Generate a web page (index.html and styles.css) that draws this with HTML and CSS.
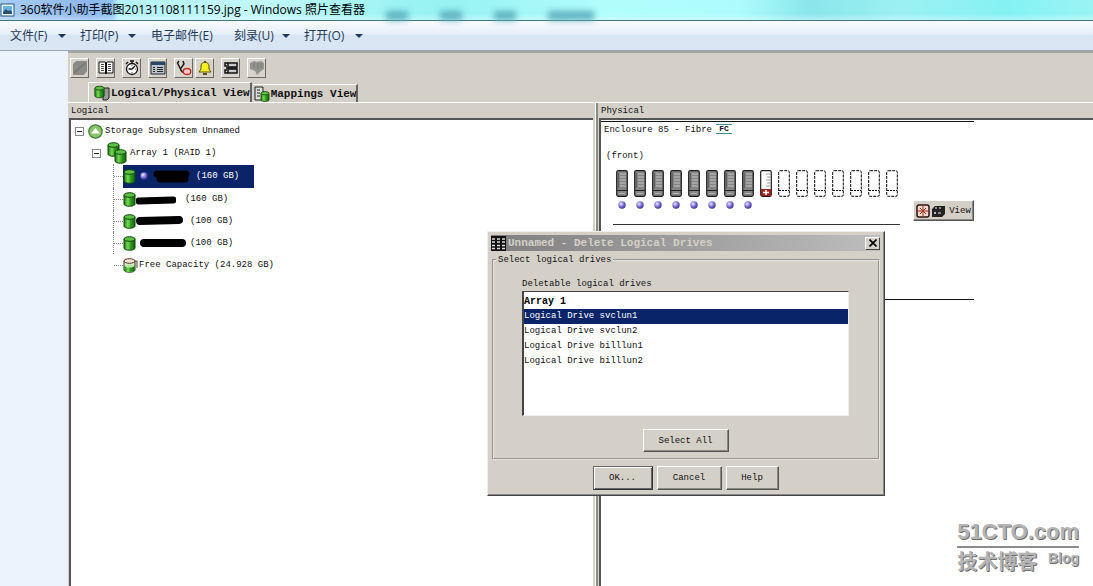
FILE: index.html
```
<!DOCTYPE html>
<html lang="zh-CN">
<head>
<meta charset="utf-8">
<title>360软件小助手截图20131108111159.jpg - Windows 照片查看器</title>
<link rel="stylesheet" href="styles.css">
</head>
<body>
<svg class="sprite" aria-hidden="true">
  <defs>
    <linearGradient id="green" x1="0" x2="1" y1="0" y2="0">
      <stop offset="0" stop-color="#1d7a12"/><stop offset=".35" stop-color="#7bd65a"/><stop offset=".6" stop-color="#2fa01c"/><stop offset="1" stop-color="#14600c"/>
    </linearGradient>
    <radialGradient id="orb" cx=".38" cy=".35" r=".65">
      <stop offset="0" stop-color="#f2f0ff"/><stop offset=".45" stop-color="#8d84e0"/><stop offset="1" stop-color="#3a3296"/>
    </radialGradient>
  </defs>
  <symbol id="cyl" viewBox="0 0 13 15">
    <path d="M1 3v9c0 3 11 3 11 0V3z" fill="url(#green)" stroke="#12450c"/>
    <ellipse cx="6.500" cy="3" rx="5.500" ry="2.300" fill="#5cc043" stroke="#12450c"/>
  </symbol>
  <symbol id="cyl2" viewBox="0 0 20 22">
    <use href="#cyl" x="0" y="0" width="13" height="15"/>
    <use href="#cyl" x="7" y="7" width="13" height="15"/>
  </symbol>
  <symbol id="free" viewBox="0 0 15 15">
    <path d="M1 3v9c0 3 11 3 11 0V3z" fill="#e4e8d4" stroke="#12450c"/>
    <path d="M1.500 8v4c0 2.500 10 2.500 10 0V8z" fill="url(#green)"/>
    <ellipse cx="6.500" cy="8" rx="4.500" ry="1.500" fill="#b7e89c"/>
    <ellipse cx="6.500" cy="3" rx="5.500" ry="2.300" fill="#eee5d6" stroke="#5c2a20"/>
    <path d="M12 3h2v7" fill="none" stroke="#444"/>
  </symbol>
  <symbol id="ball" viewBox="0 0 8 8"><circle cx="4" cy="4" r="3.700" fill="url(#orb)"/></symbol>
  <symbol id="drive" viewBox="0 0 12 27">
    <rect x=".7" y=".7" width="10.600" height="25.600" rx="1.500" fill="#858585" stroke="#1c1c1c" stroke-width="1.200"/>
    <path d="M4 4h6M4 7h6M4 10h6M4 13h6M4 16h6" stroke="#c4c4c4"/>
    <path d="M2.500 3v15" stroke="#606060"/>
    <path d="M1 20.500h10" stroke="#222"/><path d="M3 23.500h6" stroke="#b4b4b4"/>
  </symbol>
  <symbol id="spare" viewBox="0 0 12 27">
    <rect x=".7" y=".7" width="10.600" height="25.600" rx="1.500" fill="#fff" stroke="#1c1c1c" stroke-width="1.200"/>
    <path d="M6 4h5M7 7h4M6 10h5M7 13h4M6 16h5" stroke="#999"/>
    <rect x="1" y="19" width="10" height="7" fill="#a0221c"/>
    <path d="M6 20v5M3 22.500h6" stroke="#fff" stroke-width="1.600"/>
  </symbol>
  <symbol id="empty" viewBox="0 0 12 27">
    <rect x=".7" y=".7" width="10.600" height="25.600" rx="1.500" fill="#fff" stroke="#000" stroke-dasharray="3 1"/>
    <path d="M1 20.500h10" stroke="#000" stroke-dasharray="2 1"/>
  </symbol>
</svg>

<header class="titlebar">
  <svg class="i16" viewBox="0 0 16 16"><rect x="1" y="2" width="13" height="12" fill="#e9f6fd" stroke="#2b5b86"/><path d="M3 4h9v8H3z" fill="#6ab4de"/><path d="M3 10l3-3 2 2 2-1 2 2v2H3z" fill="#28506e"/></svg>
  <h1>360软件小助手截图20131108111159.jpg - Windows 照片查看器</h1>
  <span class="ghosts" aria-hidden="true"><i></i><i></i><i></i><i class="wide"></i></span>
</header>
<nav class="menubar">
  <button class="drop m1">文件(F)</button>
  <button class="drop m2">打印(P)</button>
  <button class="m3">电子邮件(E)</button>
  <button class="drop m4">刻录(U)</button>
  <button class="drop m5">打开(O)</button>
</nav>

<main class="viewer">
  <div class="app">
    <div class="toolbar">
      <button aria-label="Subsystem"><svg viewBox="0 0 16 16"><path d="M1 4l3-3h11v10l-3 4H1z" fill="#8a8a88"/><path d="M2 13L13 3" stroke="#7b7b79" stroke-width="2"/></svg></button>
      <button aria-label="Profile"><svg viewBox="0 0 16 16"><path d="M1 2h6l1 1 1-1h6v11H9l-1 1-1-1H1z" fill="#fff" stroke="#111"/><path d="M8 3v11" stroke="#111" stroke-width="2"/><path d="M3 4.500h3M3 6.500h3M3 8.500h3M3 10.500h3M10 4.500h3M10 6.500h3M10 8.500h3M10 10.500h3" stroke="#444"/></svg></button>
      <button aria-label="Timer"><svg viewBox="0 0 16 16"><circle cx="8" cy="9" r="5.500" fill="#fff" stroke="#111" stroke-width="1.300"/><path d="M6 1h4M8 1v3M2 4l2-2M14 4l-2-2M8 9l3-3M8 9H5" stroke="#111" stroke-width="1.400"/><path d="M8 5v1M8 12v1M11 9h1M4 9h1" stroke="#555"/></svg></button>
      <button aria-label="Event log"><svg viewBox="0 0 16 16"><path d="M1 2h14v12H1z" fill="#b9c4cc" stroke="#222"/><path d="M1 2h14v3H1z" fill="#294869"/><path d="M3 7.500h2M3 9.500h2M3 11.500h2M7 7.500h6M7 9.500h6M7 11.500h6" stroke="#222"/></svg></button>
      <button class="tight" aria-label="Diagnose"><svg viewBox="0 0 16 16"><path d="M3 1L1.500 3l3 6 3.500-5-1-3M4.500 9c1 3 3 4 5 4" fill="none" stroke="#111" stroke-width="1.400"/><ellipse cx="11" cy="11.500" rx="3.800" ry="3" fill="#f3c9c4" stroke="#c22a22" stroke-width="1.300"/></svg></button>
      <button aria-label="Alerts"><svg viewBox="0 0 16 16"><path d="M2 12l2-3V6c0-5 8-5 8 0v3l2 3z" fill="#f5ec22" stroke="#5a5400"/><path d="M8 1v2M6 14h4" stroke="#5a5400" stroke-width="2"/></svg></button>
      <button aria-label="Locate"><svg viewBox="0 0 16 16"><path d="M5 3h9v4H5zM5 9h9v4H5z" fill="#ccc" stroke="#111" stroke-width="1.500"/><path d="M5 3H2v3h2M5 13H2v-3h2M3 8h11" fill="none" stroke="#111" stroke-width="1.500"/></svg></button>
      <button aria-label="Help"><svg viewBox="0 0 16 16"><path d="M1 3l4-2 3 1 4-1 3 2v6l-3 2-4 4-2-4-5-2z" fill="#929290"/><path d="M5 3v5M9 3v6M12 3v5" stroke="#777"/></svg></button>
    </div>
    <div class="tabs" role="tablist">
      <button class="tab active" role="tab" aria-selected="true"><svg class="i16" viewBox="0 0 16 16"><path d="M9 3h6v10l-2 2H9z" fill="#999" stroke="#222"/><use href="#cyl" x="0" y="0" width="11" height="14"/></svg>Logical/Physical View</button>
      <button class="tab" role="tab" aria-selected="false"><svg class="i16" viewBox="0 0 16 16"><path d="M1 1h8v13H1z" fill="#ddd" stroke="#222"/><path d="M3 4h3M3 7h3M3 10h3" stroke="#222"/><use href="#cyl" x="6" y="5" width="10" height="11"/></svg>Mappings View</button>
    </div>
    <div class="split">
      <section class="pane logical">
        <h2>Logical</h2>
        <div class="well">
          <ul class="tree">
            <li class="root"><button class="exp" aria-label="Collapse"></button><svg class="i15" viewBox="0 0 15 15"><circle cx="7.500" cy="7.500" r="6.700" fill="#8cc46c" stroke="#45803a" stroke-width="1.300"/><path d="M3 9.500L7.500 4 12 9.500z" fill="#fff"/></svg>Storage Subsystem Unnamed</li>
            <li class="array"><button class="exp" aria-label="Collapse"></button><svg class="i20" viewBox="0 0 20 22"><use href="#cyl2" width="20" height="22"/></svg>Array 1 (RAID 1)</li>
            <li class="leaf picked"><span class="node sel"><svg class="cyl"><use href="#cyl"/></svg><svg class="ball"><use href="#ball"/></svg><svg class="ink" viewBox="0 0 40 14"><path d="M5 5h29M8 10h25" stroke-width="7"/></svg><span class="size">(160 GB)</span></span></li>
            <li class="leaf"><span class="node"><svg class="cyl"><use href="#cyl"/></svg><svg class="ink" viewBox="0 0 40 14"><path d="M3 9l34-1" stroke-width="7"/></svg><span class="size nine">(160 GB)</span></span></li>
            <li class="leaf"><span class="node"><svg class="cyl"><use href="#cyl"/></svg><svg class="ink long" viewBox="0 0 50 14"><path d="M4 7l39-1" stroke-width="8"/></svg><span class="size">(100 GB)</span></span></li>
            <li class="leaf"><span class="node"><svg class="cyl"><use href="#cyl"/></svg><svg class="ink long" viewBox="0 0 50 14"><path d="M8 7h38" stroke-width="8"/></svg><span class="size">(100 GB)</span></span></li>
            <li class="leaf last"><span class="node"><svg class="free"><use href="#free"/></svg>Free Capacity (24.928 GB)</span></li>
          </ul>
        </div>
      </section>
      <section class="pane physical">
        <h2>Physical</h2>
        <div class="well">
          <div class="enclosure">
            <p class="name">Enclosure 85 - Fibre <span class="fc">FC</span></p>
            <p class="side">(front)</p>
            <div class="bays">
              <div class="slot"><svg><use href="#drive"/></svg><svg class="dot"><use href="#ball"/></svg></div>
              <div class="slot"><svg><use href="#drive"/></svg><svg class="dot"><use href="#ball"/></svg></div>
              <div class="slot"><svg><use href="#drive"/></svg><svg class="dot"><use href="#ball"/></svg></div>
              <div class="slot"><svg><use href="#drive"/></svg><svg class="dot"><use href="#ball"/></svg></div>
              <div class="slot"><svg><use href="#drive"/></svg><svg class="dot"><use href="#ball"/></svg></div>
              <div class="slot"><svg><use href="#drive"/></svg><svg class="dot"><use href="#ball"/></svg></div>
              <div class="slot"><svg><use href="#drive"/></svg><svg class="dot"><use href="#ball"/></svg></div>
              <div class="slot"><svg><use href="#drive"/></svg><svg class="dot"><use href="#ball"/></svg></div>
              <div class="slot"><svg><use href="#spare"/></svg></div>
              <div class="slot"><svg><use href="#empty"/></svg></div>
              <div class="slot"><svg><use href="#empty"/></svg></div>
              <div class="slot"><svg><use href="#empty"/></svg></div>
              <div class="slot"><svg><use href="#empty"/></svg></div>
              <div class="slot"><svg><use href="#empty"/></svg></div>
              <div class="slot"><svg><use href="#empty"/></svg></div>
              <div class="slot"><svg><use href="#empty"/></svg></div>
              <button class="raised view"><svg viewBox="0 0 30 14"><rect x="1" y="1" width="12" height="12" rx="2" fill="#f2d9cf" stroke="#2a1512" stroke-width="1.500"/><path d="M7 1v12M1 7h12M4 4l6 6M10 4l-6 6" stroke="#a8301f"/><path d="M16 5l3-3h10v8l-3 3H16z" fill="#222"/><path d="M18 9h2M22 9h3M19 8v2M19 4h2M23 4h2" stroke="#eee"/></svg>View</button>
            </div>
            <hr class="mid">
          </div>
        </div>
      </section>
    </div>
  </div>
</main>

<section class="dialog" role="dialog" aria-labelledby="dlg-title">
  <header class="caption">
    <svg viewBox="0 0 15 15"><rect width="15" height="15" fill="#111"/><path d="M1 3h3M6 3h3M11 3h3M1 6h3M6 6h3M11 6h3M1 9.500h3M6 9.500h3M11 9.500h3M1 12.500h3M6 12.500h3M11 12.500h3" stroke="#ddd" stroke-width="1.500"/></svg>
    <h2 id="dlg-title">Unnamed - Delete Logical Drives</h2>
    <button class="close" aria-label="Close"><svg viewBox="0 0 8 8"><path d="M0.500 0.500l7 7M7.500 0.500l-7 7" stroke="#000" stroke-width="1.600"/></svg></button>
  </header>
  <fieldset>
    <legend>Select logical drives</legend>
    <p id="list-label">Deletable logical drives</p>
    <ul class="list" role="listbox" aria-labelledby="list-label">
      <li class="group">Array 1</li>
      <li role="option" aria-selected="true">Logical Drive svclun1</li>
      <li role="option" aria-selected="false">Logical Drive svclun2</li>
      <li role="option" aria-selected="false">Logical Drive billlun1</li>
      <li role="option" aria-selected="false">Logical Drive billlun2</li>
    </ul>
    <button class="raised all">Select All</button>
  </fieldset>
  <footer>
    <button class="raised ok">OK...</button>
    <button class="raised cancel">Cancel</button>
    <button class="raised help">Help</button>
  </footer>
</section>

<aside class="watermark">
  <strong>51CTO.com</strong>
  <div><span class="cn">技术博客</span><span class="blog">Blog</span></div>
</aside>
</body>
</html>
```
FILE: styles.css
```
* { box-sizing: border-box; }
body {
  margin: 0;
  height: 100vh;
  display: flex;
  flex-direction: column;
  overflow: hidden;
  position: relative;
  color: #111;
  font: 9px/12px "Liberation Mono", monospace;
}
h1, h2, p, ul { margin: 0; padding: 0; font: inherit; }
ul { list-style: none; }
button { margin: 0; padding: 0; border: 0; background: none; font: inherit; color: inherit; white-space: nowrap; }
svg { flex: none; display: block; }
.sprite { position: absolute; width: 0; height: 0; }
.i16 { width: 16px; height: 16px; }
.i15 { width: 15px; height: 15px; }
.i20 { width: 20px; height: 22px; }

/* Photo viewer frame */
.titlebar {
  display: flex;
  align-items: center;
  gap: 4px;
  height: 21px;
  flex: none;
  border-bottom: 1px solid #3f7480;
  background:
    linear-gradient(180deg, rgba(255,255,255,0) 70%, rgba(255,255,255,.35)),
    linear-gradient(90deg, #a9cdf3 0, #8cb8ee 90px, #8fc4f2 112px, #b4f2fb 118px, #c2f8fc 260px, #9cf3f3 400px, #98f2f2 450px, #b0fdfc 600px, #adfcfb 740px, #8ae6ea 810px, #9cf0f2 900px, #84f2f4 1010px, #9af4f4 100%);
}
.titlebar h1 {
  font: 12px/18px "Open Sans", "Noto Sans CJK SC", sans-serif;
  color: #000;
  white-space: nowrap;
}
.ghosts { display: flex; gap: 32px; padding: 10px 0 0 17px; }
.ghosts i { width: 22px; height: 9px; background: #5db0bd; filter: blur(3px); }
.ghosts .wide { width: 46px; }
.menubar {
  display: flex;
  align-items: center;
  height: 30px;
  flex: none;
  padding-left: 10px;
  border-bottom: 1px solid #98a5b2;
  background: linear-gradient(#f8fbfe 0, #e6eff8 45%, #d8e5f3 50%, #dae6f4 100%);
  color: #1e395b;
  font: 12px/16px "Open Sans", "Noto Sans CJK SC", sans-serif;
}
.menubar button { display: flex; align-items: center; justify-content: space-between; text-align: left; }
.drop::after { content: ""; border: 4px solid transparent; border-top-color: #1e395b; border-bottom: 0; }
.m1, .m2, .m4, .m5 { width: 56px; }
.m1, .m4, .m3 { margin-right: 14px; }
.m2 { margin-right: 15px; }
.m3 { width: 69px; }
.m5 { width: 59px; }
.viewer { flex: 1; display: flex; min-height: 0; padding-left: 68px; background: #edf3fc; }

/* Storage manager */
.app {
  flex: 1;
  min-width: 0;
  display: flex;
  flex-direction: column;
  background: #d4d0c8;
  border-top: 2px solid #a3a5a0;
}
.toolbar { display: flex; gap: 7px; padding: 5px 2px 0; }
.toolbar button {
  display: grid;
  place-items: center;
  width: 19px;
  height: 20px;
  background: #d8d4cc;
  border: 1px solid;
  border-color: #fff #6c6a66 #6c6a66 #fff;
}
.toolbar .tight { margin-right: -5px; }
.toolbar svg { width: 16px; height: 16px; }
.tabs { display: flex; align-items: flex-end; gap: 1px; height: 25px; padding-left: 20px; border-bottom: 1px solid #fff; }
.tab {
  display: flex;
  align-items: center;
  gap: 1px;
  height: 18px;
  padding: 0 0 0 1px;
  border-top: 1px solid #fff;
  border-right: 2px solid #666;
  font: bold 11px/14px "Liberation Mono", monospace;
}
.tab.active { height: 20px; padding-left: 5px; border-left: 1px solid #fff; }
.split { flex: 1; display: grid; grid-template-columns: 527fr 498fr; min-height: 0; }
.pane { display: flex; flex-direction: column; min-width: 0; }
.pane h2 { height: 15px; padding: 2px 2px 0; }
.logical { padding: 0 2px 0 1px; }
.physical { padding-left: 3px; border-left: 1px solid #fff; box-shadow: inset 2px 0 #8a8883; }
.well { flex: 1; border-top: 2px solid #555; border-left: 2px solid #555; background: #fff; }

.tree { padding: 0 0 0 4px; }
.tree li { display: flex; align-items: center; height: 22px; white-space: nowrap; }
.exp { width: 9px; height: 9px; border: 1px solid #888; background: linear-gradient(#222, #222) center / 5px 1px no-repeat #fff; }
.root .exp { margin-right: 4px; }
.root svg { margin-right: 2px; }
.tree .array { padding-left: 17px; }
.array .exp { margin-right: 6px; }
.array svg { margin-right: 3px; }
.tree .leaf { margin-left: 38px; border-left: 1px dotted #888; }
.tree .picked { height: 24px; }
.leaf::before { content: ""; width: 9px; border-top: 1px dotted #888; }
.tree .last { border-left-color: transparent; }
.node { display: flex; align-items: center; height: 22px; padding-right: 15px; }
.sel { height: 23px; background: #0a246a; color: #fff; }
.cyl { width: 13px; height: 15px; }
.free { width: 15px; height: 15px; margin-right: 1px; }
.ball { width: 8px; height: 8px; margin: 0 4px 0 4px; }
.ink { width: 40px; height: 14px; fill: none; stroke: #000; stroke-linecap: round; }
.ink.long { width: 50px; }
.size { padding-left: 4px; }
.size.nine { padding-left: 9px; }

.enclosure { max-width: 373px; height: 179px; margin-top: 1px; border-top: 1px solid #111; border-bottom: 1px solid #111; }
.name { display: flex; gap: 4px; padding: 2px 3px; height: 28px; }
.fc { width: 16px; height: 10px; border: 1px solid #3f8d9d; border-width: 1px 0; font: bold 8px/8px "Liberation Mono", monospace; text-align: center; }
.side { padding-left: 5px; }
.bays { display: flex; gap: 6px; padding: 8px 0 0 15px; }
.slot { width: 12px; height: 54px; display: flex; flex-direction: column; align-items: center; gap: 4px; }
.slot svg { width: 12px; height: 27px; }
.slot .dot { width: 8px; height: 8px; }
.mid { width: 287px; margin: 0 0 0 12px; border: 0; border-top: 1px solid #333; }
.raised {
  display: flex;
  align-items: center;
  justify-content: center;
  background: #d4d0c8;
  border: 1px solid;
  border-color: #fff #555 #555 #fff;
  box-shadow: inset -1px -1px #8c8982;
}
.view { width: 61px; height: 21px; gap: 3px; margin: 30px 0 0 auto; }
.view svg { width: 30px; height: 14px; }

/* Delete Logical Drives */
.dialog {
  position: absolute;
  left: 487px;
  top: 231px;
  width: 398px;
  padding: 3px 4px 5px 3px;
  background: #d4d0c8;
  border: 1px solid;
  border-color: #eee #444 #444 #eee;
  box-shadow: inset -1px -1px #888;
}
.caption { display: flex; align-items: center; height: 16px; padding-right: 0; background: linear-gradient(90deg, #7f7f7f, #bdbdbd); color: #d4d0c8; }
.caption > svg { width: 15px; height: 15px; }
.caption h2 { flex: 1; padding-left: 2px; font: bold 11px/14px "Liberation Mono", monospace; }
.close { display: grid; place-items: center; width: 15px; height: 13px; background: #d4d0c8; border: 1px solid; border-color: #fff #444 #444 #fff; }
.close svg { width: 8px; height: 8px; }
fieldset {
  min-width: 0;
  margin: 3px 0 0 1px;
  padding: 12px 29px 6px 28px;
  border: 2px groove #e8e6e0;
}
legend { margin-left: -26px; padding: 0 2px; }
.list { height: 125px; margin-top: 1px; padding: 2px 0; background: #fff; border: 1px solid; border-color: #444 #eee #eee #444; border-left-width: 2px; }
.list li { height: 15px; line-height: 15px; }
.list .group { font-weight: bold; font-size: 10px; color: #000; }
.list [aria-selected="true"] { background: #0a246a; color: #fff; }
.all { width: 86px; height: 23px; margin: 13px auto 0; }
footer { display: flex; justify-content: center; gap: 4px; padding: 6px 0 0; }
footer .raised { height: 24px; }
.ok { width: 60px; border-color: #666 #333 #333 #666; box-shadow: inset 1px 1px #fff, inset -1px -1px #666; }
.cancel { width: 65px; }
.help { width: 53px; }

.watermark {
  position: absolute;
  right: 14px;
  bottom: 10px;
  color: #b4b4b4;
  text-shadow: 1px 1px #707070;
  font-family: "Liberation Sans", "Noto Sans CJK SC", sans-serif;
  font-weight: bold;
}
.watermark strong { display: block; border-bottom: 2px solid #8c8c8c; font-size: 22px; line-height: 28px; }
.watermark div { display: flex; justify-content: space-between; }
.cn { font-size: 20px; line-height: 28px; }
.blog { font-size: 14px; line-height: 20px; }
```
